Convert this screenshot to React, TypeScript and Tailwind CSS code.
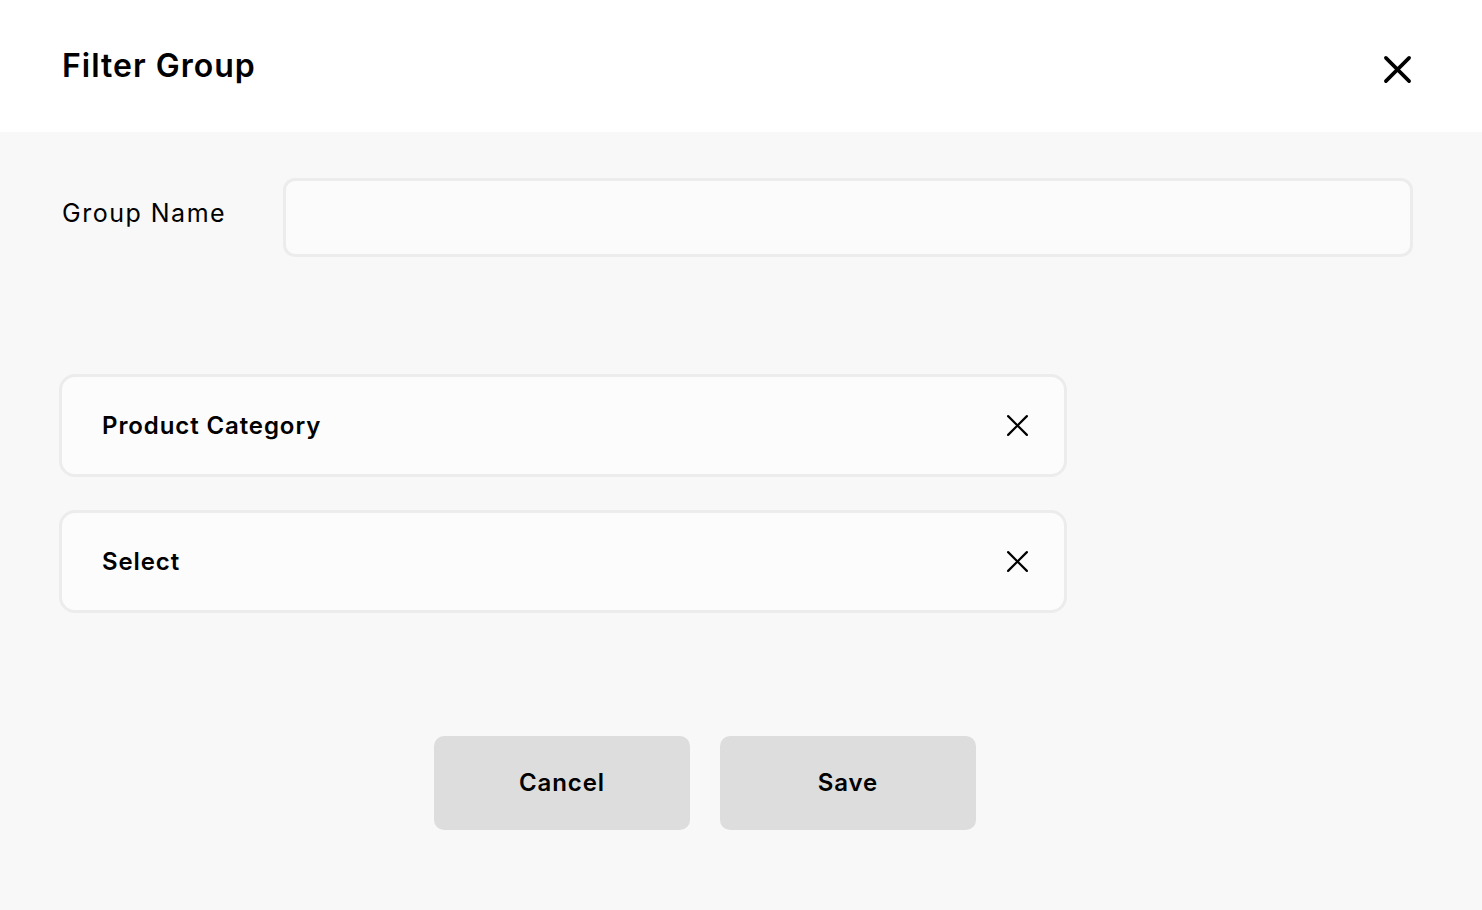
import React from "react";

function XIcon({ size, stroke }: { size: number; stroke: number }) {
  return (
    <svg width={size} height={size} viewBox="0 0 24 24" fill="none" stroke="currentColor" strokeWidth={stroke} strokeLinecap="round">
      <path d="M3 3L21 21M21 3L3 21" />
    </svg>
  );
}

function FilterRow({ label }: { label: string }) {
  return (
    <div className="flex h-[103px] items-center justify-between rounded-[16px] border-[3px] border-[#ececec] bg-[#fcfcfc] pl-[40px] pr-[34px]">
      <span className="text-[24px] font-semibold tracking-[0.9px] text-black">{label}</span>
      <button type="button" className="text-black">
        <XIcon size={25} stroke={2.1} />
      </button>
    </div>
  );
}

export default function App() {
  return (
    <div className="min-h-[910px] w-full bg-[#f8f8f8] font-['Inter',sans-serif] text-black">
      <header className="flex h-[132px] items-start justify-between bg-white pl-[62px] pr-[69px] pt-[45px]">
        <h1 className="text-[32px] font-semibold leading-[42px] tracking-[1px]">Filter Group</h1>
        <button type="button" className="mt-[9px]">
          <XIcon size={31} stroke={2.8} />
        </button>
      </header>

      <div className="flex items-start gap-[56px] pl-[62px] pr-[69px] pt-[46px]">
        <label className="mt-[19px] w-[165px] shrink-0 whitespace-nowrap text-[25px] leading-[32px] tracking-[1.5px]">
          Group Name
        </label>
        <input
          type="text"
          className="h-[79px] flex-1 rounded-[12px] border-[3px] border-[#ececec] bg-[#fbfbfb] px-4 outline-none"
        />
      </div>

      <div className="ml-[59px] flex w-[1008px] flex-col gap-[33px] pt-[117px]">
        <FilterRow label="Product Category" />
        <FilterRow label="Select" />
      </div>

      <div className="flex gap-[30px] pl-[434px] pt-[123px]">
        <button type="button" className="h-[94px] w-[256px] rounded-[10px] bg-[#dddddd] text-[24px] font-semibold tracking-[0.9px]">
          Cancel
        </button>
        <button type="button" className="h-[94px] w-[256px] rounded-[10px] bg-[#dddddd] text-[24px] font-semibold tracking-[0.9px]">
          Save
        </button>
      </div>
    </div>
  );
}
